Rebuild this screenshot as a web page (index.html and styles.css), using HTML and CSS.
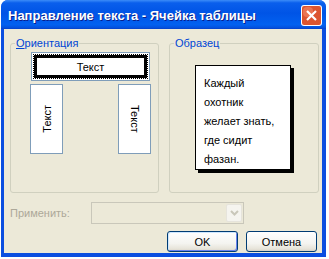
FILE: index.html
```html
<!DOCTYPE html>
<html lang="ru">
<head>
    <meta charset="UTF-8">
    <title>Направление текста - Ячейка таблицы</title>
    <link rel="stylesheet" href="styles.css">
</head>
<body>
    <div class="dialog">
        <div class="titlebar">
            <div class="title">Направление текста - Ячейка таблицы</div>
            <div class="close-box">
                <svg class="close-icon" width="21" height="21" viewBox="0 0 21 21">
                    <rect x="0" y="0" width="21" height="21" rx="3" style="fill: #ffffff"/>
                    <rect x="1" y="1" width="19" height="19" rx="2" style="fill: #dc5530"/>
                    <rect x="2" y="2" width="10" height="10" rx="4" style="fill: #ea7452"/>
                    <path d="M6 6 L15 15 M15 6 L6 15" style="stroke: #ffffff; stroke-width: 2.2; fill: none"/>
                </svg>
            </div>
        </div>

        <div class="client">
            <div class="groups">
                <fieldset class="group orient">
                    <legend><u>О</u>риентация</legend>
                    <div class="orient-body">
                        <div class="opt-h">
                            <div class="focus-ring">
                                <div class="selected">Текст</div>
                            </div>
                        </div>
                        <div class="opt-row">
                            <div class="opt-v up"><span>Текст</span></div>
                            <div class="opt-v down"><span>Текст</span></div>
                        </div>
                    </div>
                </fieldset>

                <fieldset class="group sample">
                    <legend>Образец</legend>
                    <div class="sample-box">
                        Каждый<br>
                        охотник<br>
                        желает знать,<br>
                        где сидит<br>
                        фазан.
                    </div>
                </fieldset>
            </div>

            <div class="apply-row">
                <span class="apply-label">Применить:</span>
                <div class="combo">
                    <span class="combo-btn">
                        <svg width="9" height="6" viewBox="0 0 9 6">
                            <path d="M1 1 L4.5 4.5 L8 1" fill="none" stroke="#c9c7ba" stroke-width="2"/>
                        </svg>
                    </span>
                </div>
            </div>

            <div class="buttons">
                <button class="btn default">OK</button>
                <button class="btn">Отмена</button>
            </div>
        </div>
    </div>
</body>
</html>
```

FILE: styles.css
```css
body {
    margin: 0;
    background: #fff;
    font-family: "Liberation Sans", Arial, sans-serif;
    font-size: 11px;
    color: #000;
}

/* window frame */
.dialog {
    width: 325px;
    height: 257px;
    margin-left: 1px;
    display: flex;
    flex-direction: column;
    background: #0b4ee0;
    border-radius: 7px 7px 0 0;
}

.titlebar {
    height: 29px;
    display: flex;
    align-items: center;
    justify-content: space-between;
    padding: 0 4px 0 7px;
    border-radius: 7px 7px 0 0;
    background: linear-gradient(to bottom, #3c8cf8 0%, #0a5fec 10%, #0054e6 45%, #0261f0 85%, #0452de 95%, #0640c8 100%);
}

.title {
    color: #fff;
    font-weight: bold;
    font-size: 13px;
    text-shadow: 1px 1px 0 #0a1e8c;
    padding-top: 1px;
}

.close-box {
    display: flex;
    margin-top: 1px;
}

.client {
    flex: 1;
    margin: 0 4px 4px 3px;
    background: #ece9d8;
}

/* group boxes */
.groups {
    display: flex;
    gap: 10px;
    padding: 8px 0 0 6px;
}

.group {
    margin: 0;
    padding: 0;
    height: 156px;
    box-sizing: border-box;
    border: 1px solid #d0d0bf;
    border-radius: 3px;
}

.group legend {
    padding: 0 1px;
    margin-left: 4px;
    line-height: 13px;
    color: #0046d5;
}

.orient {
    width: 149px;
}

.orient-body {
    padding: 2px 0 0 19px;
}

.sample {
    width: 150px;
}

/* orientation choices */
.opt-h {
    width: 119px;
    height: 29px;
    margin-left: 1px;
    box-sizing: border-box;
    border: 1px solid #7f9db9;
    background: #fff;
    padding: 1px;
}

.focus-ring {
    height: 100%;
    box-sizing: border-box;
    border: 1px dotted #000;
}

.selected {
    height: 100%;
    box-sizing: border-box;
    border: 3px solid #000;
    display: flex;
    align-items: center;
    justify-content: center;
}

.opt-row {
    width: 121px;
    margin-top: 3px;
    display: flex;
    justify-content: space-between;
}

.opt-v {
    width: 33px;
    height: 70px;
    box-sizing: border-box;
    border: 1px solid #7f9db9;
    background: #fff;
    display: flex;
    align-items: center;
    justify-content: center;
}

.opt-v span {
    writing-mode: vertical-rl;
}

.opt-v.up span {
    transform: rotate(180deg);
}

/* sample text */
.sample-box {
    width: 96px;
    height: 105px;
    margin: 15px 0 0 25px;
    box-sizing: border-box;
    border: 1px solid #000;
    box-shadow: 3px 3px 0 #000;
    background: #fff;
    padding: 8px 0 0 8px;
    line-height: 19px;
}

/* apply to */
.apply-row {
    display: flex;
    align-items: center;
    margin-top: 9px;
    padding-left: 6px;
}

.apply-label {
    width: 81px;
    color: #aca899;
}

.combo {
    width: 153px;
    height: 22px;
    box-sizing: border-box;
    border: 1px solid #c9c7ba;
    display: flex;
    justify-content: flex-end;
    padding: 1px;
}

.combo-btn {
    width: 16px;
    box-sizing: border-box;
    border: 1px solid #e6e4dc;
    border-radius: 2px;
    background: #f5f4ef;
    display: flex;
    align-items: center;
    justify-content: center;
}

/* buttons */
.buttons {
    display: flex;
    justify-content: flex-end;
    gap: 8px;
    margin-top: 7px;
    padding-right: 5px;
}

.btn {
    width: 71px;
    height: 21px;
    padding: 0;
    font-family: inherit;
    font-size: 11px;
    color: #000;
    border: 1px solid #003c74;
    border-radius: 3px;
    background: linear-gradient(to bottom, #ffffff 0%, #f4f4f0 60%, #e6e3d8 90%, #d6d0c5 100%);
}

.btn.default {
    box-shadow: inset 1px 1px 0 #cee7ff, inset -1px -1px 0 #6982ee;
}
```
